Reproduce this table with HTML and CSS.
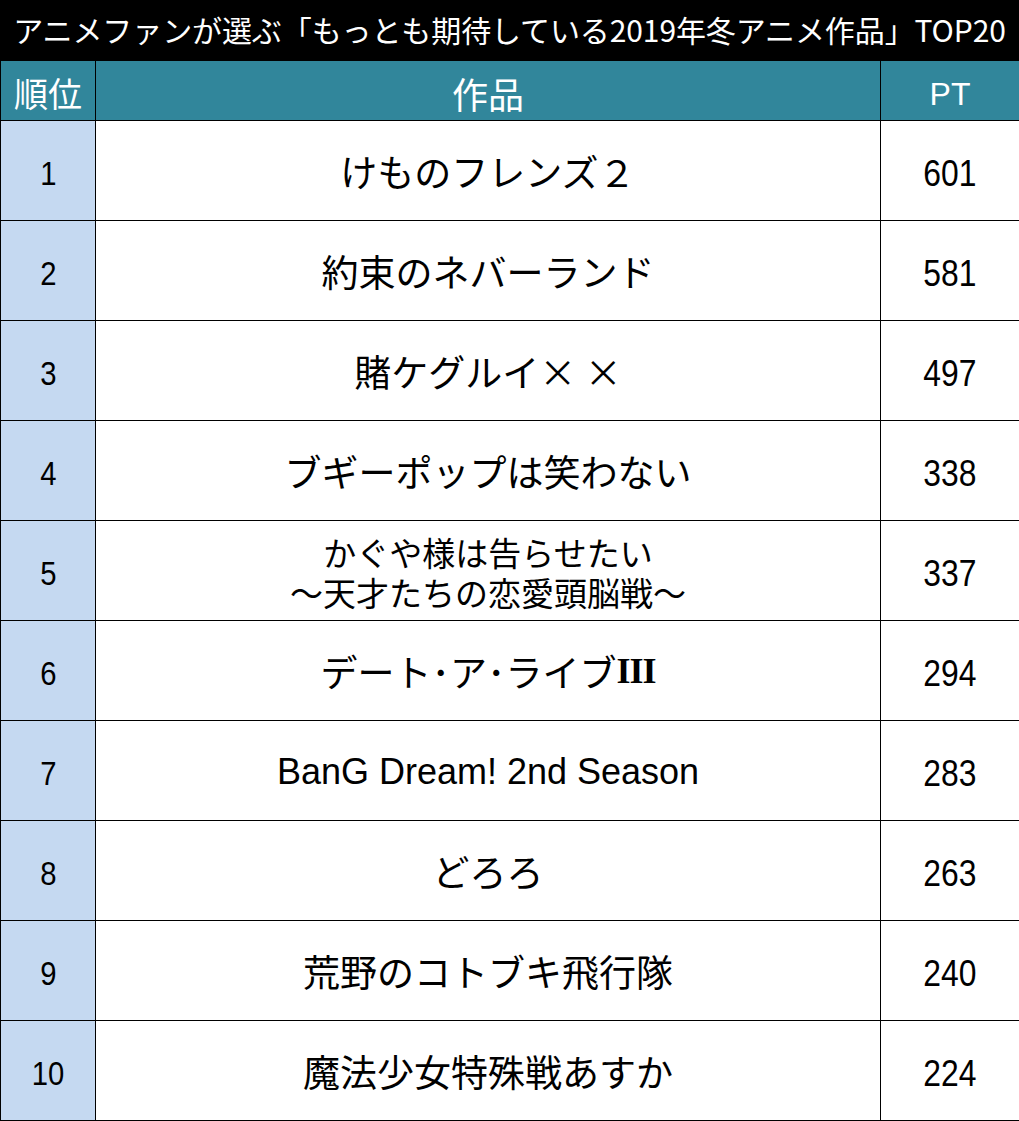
FILE: index.html
```html
<!DOCTYPE html>
<html lang="ja">
<head>
<meta charset="utf-8">
<title>2019年冬アニメ TOP20</title>
<link rel="stylesheet" href="styles.css">
</head>
<body>
<div class="title">アニメファンが選ぶ「もっとも期待している2019年冬アニメ作品」TOP20</div>
<div class="table">
  <div class="cell head rank-h">順位</div>
  <div class="cell head work-h">作品</div>
  <div class="cell head pt-h">PT</div>

  <div class="cell rank"><span class="num">1</span></div>
  <div class="cell work">けものフレンズ２</div>
  <div class="cell pt"><span class="num">601</span></div>

  <div class="cell rank"><span class="num">2</span></div>
  <div class="cell work">約束のネバーランド</div>
  <div class="cell pt"><span class="num">581</span></div>

  <div class="cell rank"><span class="num">3</span></div>
  <div class="cell work">賭ケグルイ× ×</div>
  <div class="cell pt"><span class="num">497</span></div>

  <div class="cell rank"><span class="num">4</span></div>
  <div class="cell work">ブギーポップは笑わない</div>
  <div class="cell pt"><span class="num">338</span></div>

  <div class="cell rank"><span class="num">5</span></div>
  <div class="cell work two"><span class="line">かぐや様は告らせたい</span><span class="line">〜天才たちの恋愛頭脳戦〜</span></div>
  <div class="cell pt"><span class="num">337</span></div>

  <div class="cell rank"><span class="num">6</span></div>
  <div class="cell work">デート･ア･ライブ<span class="roman">III</span></div>
  <div class="cell pt"><span class="num">294</span></div>

  <div class="cell rank"><span class="num">7</span></div>
  <div class="cell work latin">BanG Dream! 2nd Season</div>
  <div class="cell pt"><span class="num">283</span></div>

  <div class="cell rank"><span class="num">8</span></div>
  <div class="cell work">どろろ</div>
  <div class="cell pt"><span class="num">263</span></div>

  <div class="cell rank"><span class="num">9</span></div>
  <div class="cell work">荒野のコトブキ飛行隊</div>
  <div class="cell pt"><span class="num">240</span></div>

  <div class="cell rank"><span class="num">10</span></div>
  <div class="cell work">魔法少女特殊戦あすか</div>
  <div class="cell pt"><span class="num">224</span></div>
</div>
</body>
</html>
```
FILE: styles.css
```css
* { box-sizing: border-box; }
html, body { margin: 0; padding: 0; background: #fff; }
body {
  width: 1019px;
  font-family: "Noto Sans CJK JP", "Noto Sans", sans-serif;
  color: #000;
  overflow: hidden;
}
.title {
  height: 61px;
  background: #000;
  color: #fff;
  font-size: 30px;
  line-height: 58px;
  text-align: center;
  white-space: nowrap;
  letter-spacing: -0.1px;
}
.table {
  display: grid;
  grid-template-columns: 96px 785px 138px;
  grid-template-rows: 60px repeat(10, 100px);
}
.cell {
  display: flex;
  align-items: center;
  justify-content: center;
  border-bottom: 1px solid #000;
  text-align: center;
}
.rank, .rank-h { border-left: 1px solid #000; border-right: 1px solid #000; }
.work, .work-h { border-right: 1px solid #000; }
.head {
  background: #31869b;
  color: #fff;
  padding-top: 4px;
}
.rank-h { font-size: 34px; }
.work-h { font-size: 36px; }
.pt-h { font-family: "Liberation Sans", Arial, sans-serif; font-size: 32px; padding-top: 8px; }
.rank { background: #c5d9f1; }
.num {
  display: inline-block;
  font-family: "Liberation Sans", Arial, sans-serif;
  transform: scaleX(0.86);
}
.rank, .pt { padding-top: 6px; }
.rank .num { font-size: 34px; }
.pt .num { font-size: 37px; }
.work {
  font-size: 37px;
  line-height: 1.2;
  white-space: nowrap;
  padding-top: 2px;
}
.work.two {
  flex-direction: column;
  font-size: 33px;
}
.two .line {
  display: block;
  line-height: 40px;
}
.roman {
  font-family: "Liberation Serif", "Times New Roman", serif;
  font-weight: bold;
  font-size: 36px;
  letter-spacing: -1px;
}
.work.latin { font-family: "Liberation Sans", Arial, sans-serif; font-size: 36px; }
```
